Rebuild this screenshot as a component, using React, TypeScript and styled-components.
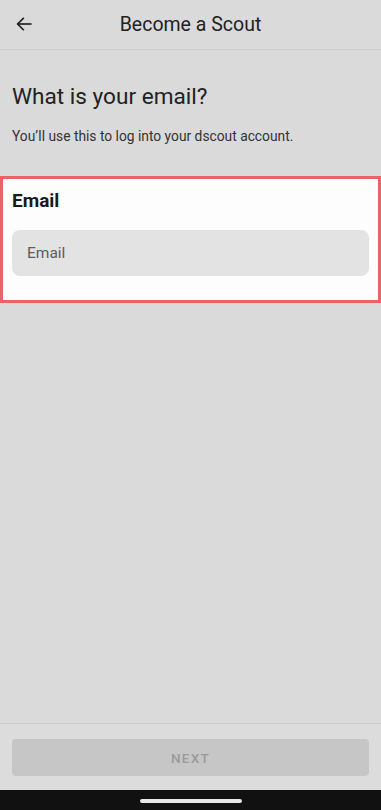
import React from "react";
import styled, { createGlobalStyle } from "styled-components";

const GlobalStyle = createGlobalStyle`
  html, body {
    margin: 0;
    padding: 0;
    background: #dadada;
  }
  body {
    font-family: Roboto, "Liberation Sans", sans-serif;
  }
  * { box-sizing: border-box; }
`;

const App = () => {
  return (
    <Screen>
      <GlobalStyle />
      <Header>
        <BackButton aria-label="Back">
          <svg width="18" height="18" viewBox="0 0 24 24" fill="none" stroke="#1f1f1f" strokeWidth="2.2" strokeLinecap="square">
            <path d="M21 12H4" />
            <path d="M11 4.5L3.5 12L11 19.5" strokeLinejoin="miter" />
          </svg>
        </BackButton>
        <Title>Become a Scout</Title>
      </Header>
      <Content>
        <Heading>What is your email?</Heading>
        <Subtext>You’ll use this to log into your dscout account.</Subtext>
      </Content>
      <FieldCard>
        <FieldLabel>Email</FieldLabel>
        <Input placeholder="Email" />
      </FieldCard>
      <Spacer />
      <Footer>
        <NextButton disabled>NEXT</NextButton>
      </Footer>
      <NavBar>
        <HomePill />
      </NavBar>
    </Screen>
  );
};

export default App;

const Screen = styled.div`
  width: 381px;
  height: 810px;
  display: flex;
  flex-direction: column;
  background: #dadada;
`;

const Header = styled.header`
  height: 50px;
  display: flex;
  align-items: center;
  justify-content: center;
  position: relative;
  border-bottom: 1px solid #cdcdcd;
`;

const BackButton = styled.button`
  position: absolute;
  left: 12px;
  top: 14px;
  width: 24px;
  height: 20px;
  padding: 0;
  border: none;
  background: none;
  display: flex;
  align-items: center;
  justify-content: center;
`;

const Title = styled.h1`
  margin: 0;
  font-size: 19.5px;
  font-weight: 400;
  color: #222;
  line-height: 24px;
`;

const Content = styled.section`
  padding: 33px 12px 0;
`;

const Heading = styled.h2`
  margin: 0;
  font-size: 22.6px;
  font-weight: 400;
  color: #222;
  line-height: 28px;
`;

const Subtext = styled.p`
  margin: 17px 0 0;
  font-size: 13.8px;
  color: #333;
  line-height: 17px;
`;

const FieldCard = styled.div`
  margin-top: 31px;
  background: #fdfdfd;
  border: 3px solid #e96565;
  padding: 9px 9px 24px;
`;

const FieldLabel = styled.div`
  font-size: 19px;
  font-weight: 700;
  color: #1a1a1a;
  line-height: 26px;
`;

const Input = styled.input`
  margin-top: 16px;
  width: 100%;
  height: 46px;
  border: none;
  border-radius: 8px;
  background: #e3e3e3;
  padding: 0 15px;
  font-family: Roboto, "Liberation Sans", sans-serif;
  font-size: 15.5px;
  color: #333;
  outline: none;
  &::placeholder {
    color: #5c5c5c;
  }
`;

const Spacer = styled.div`
  flex: 1;
`;

const Footer = styled.footer`
  border-top: 1px solid #cccccc;
  background: #dcdcdc;
  padding: 15px 12px 14px;
`;

const NextButton = styled.button`
  width: 100%;
  height: 37px;
  border: none;
  border-radius: 4px;
  background: #c6c6c6;
  color: #9a9a9a;
  font-family: Roboto, "Liberation Sans", sans-serif;
  font-size: 13.5px;
  font-weight: 500;
  letter-spacing: 1.3px;
`;

const NavBar = styled.div`
  height: 20px;
  background: #111;
  display: flex;
  align-items: center;
  justify-content: center;
`;

const HomePill = styled.div`
  width: 102px;
  height: 4px;
  border-radius: 2px;
  background: #e8e8e8;
  margin-top: 1px;
`;
